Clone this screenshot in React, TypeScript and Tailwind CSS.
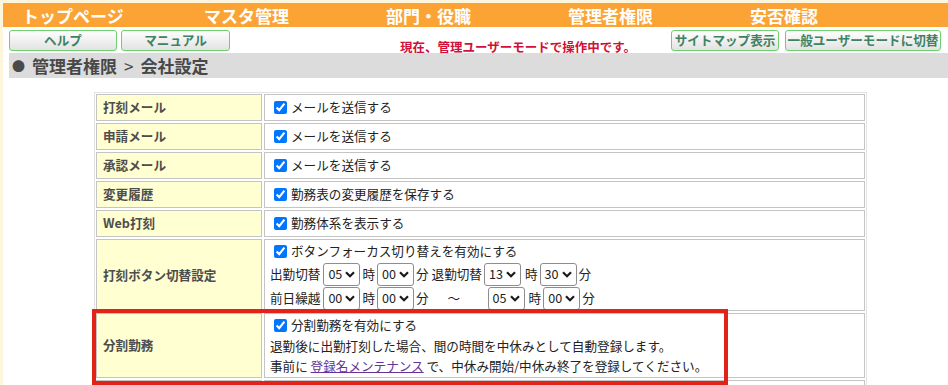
import React from "react";

const navItems = ["トップページ", "マスタ管理", "部門・役職", "管理者権限", "安否確認"];

function Btn({ label, w }: { label: string; w: string }) {
  return (
    <div
      className={`${w} flex h-[21px] items-center justify-center rounded-[3px] border border-[#6fd06f] bg-gradient-to-b from-white to-[#e2e2e2] text-[12.6px] font-bold leading-none text-[#3f8262]`}
    >
      {label}
    </div>
  );
}

function Check() {
  return (
    <input
      type="checkbox"
      defaultChecked
      className="ml-[4px] mr-[4px] h-[13px] w-[13px] shrink-0"
    />
  );
}

function Sel({ v }: { v: string }) {
  return (
    <span className="flex h-[23px] w-[37px] shrink-0 items-center justify-between rounded-[3px] border border-[#8d8d8d] bg-white pl-[4px] pr-[4px]">
      <span>{v}</span>
      <svg width="10" height="7" viewBox="0 0 10 7">
        <polyline points="1,1.2 5,5.2 9,1.2" fill="none" stroke="#1a1a1a" strokeWidth="2.2" />
      </svg>
    </span>
  );
}

function Label({ children }: { children: React.ReactNode }) {
  return (
    <div className="flex items-center border border-[#c4c4c4] bg-[#ffffd2] pl-[6px] text-[12.6px] font-bold text-[#4d4d4d]">
      {children}
    </div>
  );
}

function Value({ children }: { children?: React.ReactNode }) {
  return (
    <div className="flex flex-col justify-center border border-[#c4c4c4] bg-white pl-[5px] text-[12.6px] text-[#222]">
      {children}
    </div>
  );
}

function CheckLine({ text }: { text: string }) {
  return (
    <div className="flex items-center">
      <Check />
      <span>{text}</span>
    </div>
  );
}

export default function App() {
  return (
    <div
      className="h-[385px] overflow-hidden bg-[#fdf5dc] pl-[3px] pt-[3px]"
      style={{ fontFamily: '"Noto Sans CJK JP", "Noto Sans", sans-serif' }}
    >
      <div className="h-full bg-white">
        {/* top nav */}
        <div className="flex h-[24px] items-center bg-[#fba435] pl-[19px] text-[17px] font-bold leading-none text-white">
          {navItems.map((n) => (
            <div key={n} className="w-[182px] shrink-0">
              {n}
            </div>
          ))}
        </div>

        {/* buttons */}
        <div className="flex h-[26px] items-start pl-[6px] pr-[7px] pt-[3px]">
          <div className="flex gap-[4px]">
            <Btn label="ヘルプ" w="w-[108px]" />
            <Btn label="マニュアル" w="w-[109px]" />
          </div>
          <span className="ml-[170px] mt-[10px] text-[12.5px] font-bold leading-[14px] text-[#d0103a]">
            現在、管理ユーザーモードで操作中です。
          </span>
          <div className="ml-auto flex gap-[6px]">
            <Btn label="サイトマップ表示" w="w-[108px]" />
            <Btn label="一般ユーザーモードに切替" w="w-[156px]" />
          </div>
        </div>

        {/* breadcrumb */}
        <div className="ml-[6px] flex h-[25px] items-center bg-[#dcdcdc] pl-[3px] text-[17px] font-bold leading-none text-[#484848]">
          <span className="mr-[7px] text-[13px] text-[#4a4a4a]">●</span>
          <span>管理者権限</span>
          <span className="mx-[7px] font-normal">&gt;</span>
          <span>会社設定</span>
        </div>

        {/* settings table */}
        <div className="pl-[91px] pt-[14px]">
          <div className="relative w-[773px] border border-[#e2e2e2] p-[1px]">
            <div className="grid grid-cols-[166px_601px] grid-rows-[27px_27px_27px_27px_27px_72px_65px_27px] gap-[2px]">
              <Label>打刻メール</Label>
              <Value>
                <CheckLine text="メールを送信する" />
              </Value>
              <Label>申請メール</Label>
              <Value>
                <CheckLine text="メールを送信する" />
              </Value>
              <Label>承認メール</Label>
              <Value>
                <CheckLine text="メールを送信する" />
              </Value>
              <Label>変更履歴</Label>
              <Value>
                <CheckLine text="勤務表の変更履歴を保存する" />
              </Value>
              <Label>Web打刻</Label>
              <Value>
                <CheckLine text="勤務体系を表示する" />
              </Value>

              <Label>打刻ボタン切替設定</Label>
              <Value>
                <div className="flex h-[22px] items-center">
                  <Check />
                  <span>ボタンフォーカス切り替えを有効にする</span>
                </div>
                <div className="flex h-[24px] items-center gap-[2px]">
                  <span className="mr-[1px]">出勤切替</span>
                  <Sel v="05" />
                  <span>時</span>
                  <Sel v="00" />
                  <span>分</span>
                  <span className="ml-[1px]">退勤切替</span>
                  <Sel v="13" />
                  <span className="ml-[2px]">時</span>
                  <Sel v="30" />
                  <span>分</span>
                </div>
                <div className="flex h-[24px] items-center gap-[2px]">
                  <span className="mr-[1px]">前日繰越</span>
                  <Sel v="00" />
                  <span>時</span>
                  <Sel v="00" />
                  <span>分</span>
                  <span className="w-[55px] pl-[17px]">～</span>
                  <Sel v="05" />
                  <span className="ml-[2px]">時</span>
                  <Sel v="00" />
                  <span>分</span>
                </div>
              </Value>

              <Label>分割勤務</Label>
              <Value>
                <div className="flex h-[22px] items-center">
                  <Check />
                  <span>分割勤務を有効にする</span>
                </div>
                <div className="flex h-[20px] items-center">
                  退勤後に出勤打刻した場合、間の時間を中休みとして自動登録します。
                </div>
                <div className="flex h-[20px] items-center whitespace-pre">
                  <span>事前に </span>
                  <a href="#" className="text-[#663399] underline">
                    登録名メンテナンス
                  </a>
                  <span> で、中休み開始/中休み終了を登録してください。</span>
                </div>
              </Value>

              <Label>{""}</Label>
              <Value />
            </div>

            {/* highlight annotation */}
            <div className="pointer-events-none absolute left-[-3px] top-[216px] h-[76px] w-[636px] border-4 border-[#e2231a]" />
          </div>
        </div>
      </div>
    </div>
  );
}
